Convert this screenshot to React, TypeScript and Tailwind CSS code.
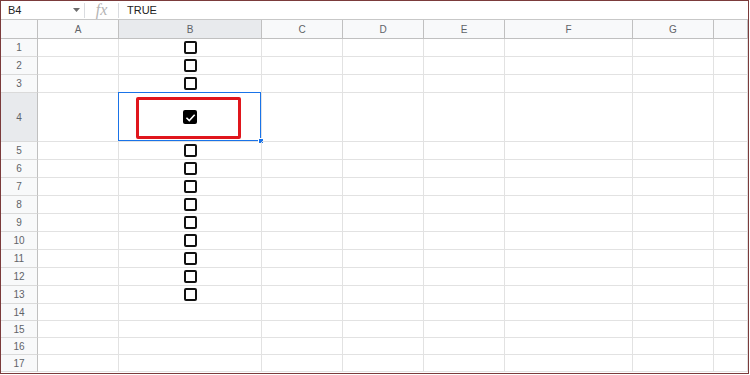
import React from "react";

const columns = ["A", "B", "C", "D", "E", "F", "G", ""];
const rows = Array.from({ length: 17 }, (_, i) => i + 1);

function Checkbox({ checked }: { checked?: boolean }) {
  if (checked) {
    return (
      <div className="w-[14px] h-[14px] rounded-[2px] bg-black flex items-center justify-center">
        <svg width="11" height="11" viewBox="0 0 10 10">
          <path d="M1.3 5.2 L3.9 7.7 L8.8 2.5" fill="none" stroke="white" strokeWidth="1.5" />
        </svg>
      </div>
    );
  }
  return <div className="w-[13px] h-[13px] rounded-[2px] border-2 border-[#111]" />;
}

function rowHeight(r: number) {
  if (r === 4) return "h-[49px]";
  if (r > 13) return "h-[17px]";
  return "h-[18px]";
}

export default function App() {
  return (
    <div className="w-[750px] h-[375px] bg-white overflow-hidden font-['Liberation_Sans',Arial,sans-serif]">
      <div className="w-[749px] h-[374px] border border-[#7b3b3b] overflow-hidden flex flex-col">
        {/* Formula bar */}
        <div className="h-[19px] shrink-0 flex items-center border-b border-[#c7c7c7] text-[11px] text-[#222]">
          <div className="w-[83px] h-full flex items-center justify-between pl-[7px] pr-[4px]">
            <span>B4</span>
            <svg width="7" height="4" viewBox="0 0 7 4">
              <path d="M0 0 L7 0 L3.5 4 Z" fill="#6b6b6b" />
            </svg>
          </div>
          <div className="w-px h-[15px] bg-[#dadce0]" />
          <div className="w-[33px] h-full flex items-center justify-center text-[16px] italic text-[#b4b4b4] font-['Liberation_Serif',serif]">
            fx
          </div>
          <div className="w-px h-[15px] bg-[#dadce0]" />
          <div className="pl-[8px]">TRUE</div>
        </div>

        {/* Grid */}
        <div className="grid grid-cols-[37px_81px_143px_81px_81px_81px_128px_81px_1fr] text-[10px] text-[#5f6368]">
          {/* Header row */}
          <div className="h-[19px] bg-[#f8f9fa] border-r border-b border-[#c0c0c0]" />
          {columns.map((c, i) => (
            <div
              key={i}
              className={`h-[19px] flex items-center justify-center border-r border-b border-[#c0c0c0] ${
                c === "B" ? "bg-[#e8eaed]" : "bg-[#f8f9fa]"
              }`}
            >
              {c}
            </div>
          ))}

          {rows.map((r) => (
            <React.Fragment key={r}>
              <div
                className={`${rowHeight(r)} flex items-center justify-center border-r border-b border-r-[#c0c0c0] border-b-[#dadada] ${
                  r === 4 ? "bg-[#e8eaed]" : "bg-[#f8f9fa]"
                }`}
              >
                {r}
              </div>
              {columns.map((c, i) => (
                <div
                  key={i}
                  className={`${rowHeight(r)} relative flex items-center justify-center border-r border-b border-[#e2e2e2]`}
                >
                  {c === "B" && r <= 13 && <Checkbox checked={r === 4} />}
                  {c === "B" && r === 4 && (
                    <>
                      <div className="absolute left-[-1px] top-[-1px] right-0 bottom-0 border border-[#1a73e8]" />
                      <div className="absolute right-[-3px] bottom-[-3px] w-[6px] h-[6px] bg-[#1a73e8] border border-white" />
                      <div className="absolute left-[17px] top-[4px] w-[105px] h-[42px] border-[3px] border-[#e0161c] rounded-[2px]" />
                    </>
                  )}
                </div>
              ))}
            </React.Fragment>
          ))}
        </div>
      </div>
    </div>
  );
}
